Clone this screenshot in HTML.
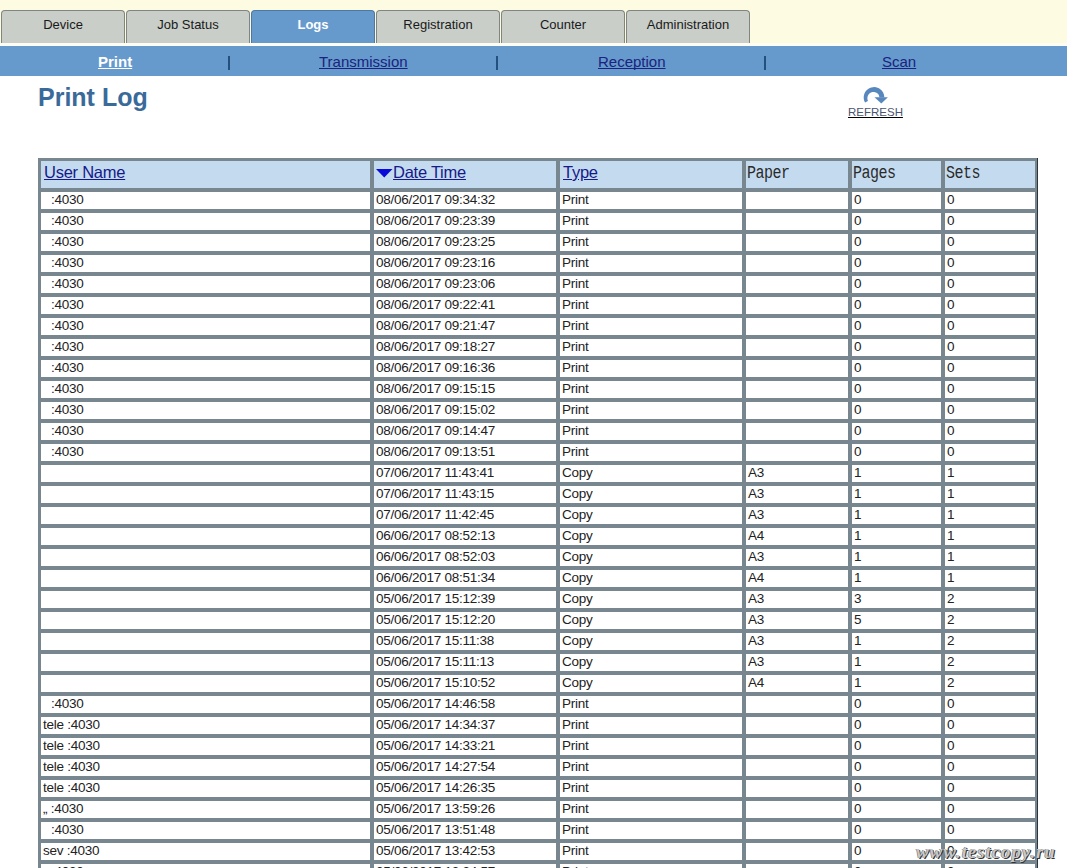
<!DOCTYPE html>
<html><head><meta charset="utf-8">
<style>
html,body{margin:0;padding:0;}
body{width:1067px;height:868px;overflow:hidden;position:relative;background:#fff;font-family:"Liberation Sans",sans-serif;}
#top{position:absolute;left:0;top:0;width:1067px;height:46px;background:#fdfce2;}
#strip{position:absolute;left:0;top:43px;width:1067px;height:3px;background:#fdfdf3;}
.tab{position:absolute;top:10px;width:122px;height:32px;background:#c9cec9;border:1px solid #80857f;border-bottom:none;border-radius:4px 4px 0 0;font-size:13px;color:#1a1a1a;text-align:center;line-height:28px;}
.tab.on{background:#6699cc;border-color:#4c78a8;color:#fff;font-weight:bold;}
#nav{position:absolute;left:0;top:46px;width:1067px;height:30px;background:#6699cc;}
.nl{position:absolute;top:6px;font-size:15px;color:#1a237e;text-decoration:underline;text-decoration-skip-ink:none;white-space:nowrap;}
.nl.on{color:#fff;font-weight:bold;}
.sep{position:absolute;top:56px;width:2px;height:14px;background:#24507e;}
#title{position:absolute;left:38px;top:83px;font-size:25px;font-weight:bold;color:#3a6a9a;white-space:nowrap;}
#refresh{position:absolute;left:848px;top:106px;font-size:11.5px;color:#4a5570;text-decoration:underline;text-decoration-color:#000;}
#icon{position:absolute;left:858px;top:82px;}
#grid{position:absolute;left:38px;top:158px;width:994px;padding:3px;background:#78868f;box-shadow:inset -1px 0 0 #2c353c;display:grid;
 grid-template-columns:329px 182px 182px 102px 89px 90px;grid-template-rows:27px;grid-auto-rows:17px;gap:4px;}
.c{background:#fff;font-size:13.5px;letter-spacing:-0.25px;color:#222;padding-left:2px;line-height:15px;white-space:nowrap;overflow:hidden;}
.u2{padding-left:10px;}
.h{background:#c4dbef;font-size:16.5px;line-height:23px;padding-left:3px;}
.h a{color:#16198a;text-decoration:underline;}
.hm{font-family:"Liberation Mono",monospace;font-size:15px;letter-spacing:-0.5px;color:#2a2a2a;padding-left:1px;}
.hm span{display:inline-block;transform:scaleY(1.25);transform-origin:0 80%;position:relative;top:3px;}
#wm{position:absolute;left:916px;top:841px;font-family:"Liberation Serif",serif;font-style:italic;font-weight:bold;font-size:19px;color:#c8c8c8;text-shadow:1px 1px 0 #333,-0.5px -0.5px 0 #666;white-space:nowrap;letter-spacing:0.9px;}
</style></head><body>
<div id="top"></div>
<div id="strip"></div>
<div class="tab" style="left:1px">Device</div>
<div class="tab" style="left:126px">Job Status</div>
<div class="tab on" style="left:251px">Logs</div>
<div class="tab" style="left:376px">Registration</div>
<div class="tab" style="left:501px">Counter</div>
<div class="tab" style="left:626px">Administration</div>
<div id="nav"></div>
<div class="nl on" style="left:98px;top:53px">Print</div>
<div class="sep" style="left:228px"></div>
<div class="nl" style="left:319px;top:53px">Transmission</div>
<div class="sep" style="left:496px"></div>
<div class="nl" style="left:598px;top:53px">Reception</div>
<div class="sep" style="left:764px"></div>
<div class="nl" style="left:882px;top:53px">Scan</div>
<div id="title">Print Log</div>
<svg id="icon" width="36" height="26" viewBox="0 0 36 26">
<path d="M7.08 20.55 L6.40 19.13 L5.94 17.63 L5.72 16.07 L5.74 14.50 L6.00 12.95 L6.48 11.46 L7.19 10.06 L8.11 8.78 L9.21 7.66 L10.47 6.71 L11.85 5.97 L13.33 5.45 L14.88 5.16 L16.45 5.11 L18.01 5.30 L19.52 5.72 L20.95 6.37 L22.27 7.23 L23.44 8.28 L24.44 9.49 L25.24 10.84 L25.82 12.30 L26.18 13.83 L26.30 15.40 L21.30 15.40 L21.24 14.59 L21.05 13.81 L20.75 13.06 L20.34 12.36 L19.83 11.73 L19.23 11.20 L18.55 10.75 L17.81 10.42 L17.03 10.20 L16.23 10.11 L15.41 10.04 L14.57 10.08 L13.73 10.24 L12.90 10.54 L12.12 10.98 L11.40 11.54 L10.76 12.22 L10.22 13.01 L9.80 13.88 L9.52 14.83 L9.39 15.83 L9.41 16.86 L9.59 17.89 L9.94 18.90 Z" fill="#5887bd"/>
<path d="M16.5 15.2 L29.9 15.2 L23.3 21.6 Z" fill="#5887bd"/>
</svg>
<div id="refresh">REFRESH</div>
<div id="grid">
<div class="c h"><a>User Name</a></div>
<div class="c h"><svg width="17" height="9" style="vertical-align:0px;margin-left:-1px"><path d="M0 0 L16.5 0 L8.25 8.5 Z" fill="#0a0ad8"/></svg><a>Date Time</a></div>
<div class="c h"><a>Type</a></div>
<div class="c h hm"><span>Paper</span></div>
<div class="c h hm"><span>Pages</span></div>
<div class="c h hm"><span>Sets</span></div>
<div class="c u2">:4030</div><div class="c">08/06/2017 09:34:32</div><div class="c">Print</div><div class="c"></div><div class="c">0</div><div class="c">0</div>
<div class="c u2">:4030</div><div class="c">08/06/2017 09:23:39</div><div class="c">Print</div><div class="c"></div><div class="c">0</div><div class="c">0</div>
<div class="c u2">:4030</div><div class="c">08/06/2017 09:23:25</div><div class="c">Print</div><div class="c"></div><div class="c">0</div><div class="c">0</div>
<div class="c u2">:4030</div><div class="c">08/06/2017 09:23:16</div><div class="c">Print</div><div class="c"></div><div class="c">0</div><div class="c">0</div>
<div class="c u2">:4030</div><div class="c">08/06/2017 09:23:06</div><div class="c">Print</div><div class="c"></div><div class="c">0</div><div class="c">0</div>
<div class="c u2">:4030</div><div class="c">08/06/2017 09:22:41</div><div class="c">Print</div><div class="c"></div><div class="c">0</div><div class="c">0</div>
<div class="c u2">:4030</div><div class="c">08/06/2017 09:21:47</div><div class="c">Print</div><div class="c"></div><div class="c">0</div><div class="c">0</div>
<div class="c u2">:4030</div><div class="c">08/06/2017 09:18:27</div><div class="c">Print</div><div class="c"></div><div class="c">0</div><div class="c">0</div>
<div class="c u2">:4030</div><div class="c">08/06/2017 09:16:36</div><div class="c">Print</div><div class="c"></div><div class="c">0</div><div class="c">0</div>
<div class="c u2">:4030</div><div class="c">08/06/2017 09:15:15</div><div class="c">Print</div><div class="c"></div><div class="c">0</div><div class="c">0</div>
<div class="c u2">:4030</div><div class="c">08/06/2017 09:15:02</div><div class="c">Print</div><div class="c"></div><div class="c">0</div><div class="c">0</div>
<div class="c u2">:4030</div><div class="c">08/06/2017 09:14:47</div><div class="c">Print</div><div class="c"></div><div class="c">0</div><div class="c">0</div>
<div class="c u2">:4030</div><div class="c">08/06/2017 09:13:51</div><div class="c">Print</div><div class="c"></div><div class="c">0</div><div class="c">0</div>
<div class="c"></div><div class="c">07/06/2017 11:43:41</div><div class="c">Copy</div><div class="c">A3</div><div class="c">1</div><div class="c">1</div>
<div class="c"></div><div class="c">07/06/2017 11:43:15</div><div class="c">Copy</div><div class="c">A3</div><div class="c">1</div><div class="c">1</div>
<div class="c"></div><div class="c">07/06/2017 11:42:45</div><div class="c">Copy</div><div class="c">A3</div><div class="c">1</div><div class="c">1</div>
<div class="c"></div><div class="c">06/06/2017 08:52:13</div><div class="c">Copy</div><div class="c">A4</div><div class="c">1</div><div class="c">1</div>
<div class="c"></div><div class="c">06/06/2017 08:52:03</div><div class="c">Copy</div><div class="c">A3</div><div class="c">1</div><div class="c">1</div>
<div class="c"></div><div class="c">06/06/2017 08:51:34</div><div class="c">Copy</div><div class="c">A4</div><div class="c">1</div><div class="c">1</div>
<div class="c"></div><div class="c">05/06/2017 15:12:39</div><div class="c">Copy</div><div class="c">A3</div><div class="c">3</div><div class="c">2</div>
<div class="c"></div><div class="c">05/06/2017 15:12:20</div><div class="c">Copy</div><div class="c">A3</div><div class="c">5</div><div class="c">2</div>
<div class="c"></div><div class="c">05/06/2017 15:11:38</div><div class="c">Copy</div><div class="c">A3</div><div class="c">1</div><div class="c">2</div>
<div class="c"></div><div class="c">05/06/2017 15:11:13</div><div class="c">Copy</div><div class="c">A3</div><div class="c">1</div><div class="c">2</div>
<div class="c"></div><div class="c">05/06/2017 15:10:52</div><div class="c">Copy</div><div class="c">A4</div><div class="c">1</div><div class="c">2</div>
<div class="c u2">:4030</div><div class="c">05/06/2017 14:46:58</div><div class="c">Print</div><div class="c"></div><div class="c">0</div><div class="c">0</div>
<div class="c">tele :4030</div><div class="c">05/06/2017 14:34:37</div><div class="c">Print</div><div class="c"></div><div class="c">0</div><div class="c">0</div>
<div class="c">tele :4030</div><div class="c">05/06/2017 14:33:21</div><div class="c">Print</div><div class="c"></div><div class="c">0</div><div class="c">0</div>
<div class="c">tele :4030</div><div class="c">05/06/2017 14:27:54</div><div class="c">Print</div><div class="c"></div><div class="c">0</div><div class="c">0</div>
<div class="c">tele :4030</div><div class="c">05/06/2017 14:26:35</div><div class="c">Print</div><div class="c"></div><div class="c">0</div><div class="c">0</div>
<div class="c">„ :4030</div><div class="c">05/06/2017 13:59:26</div><div class="c">Print</div><div class="c"></div><div class="c">0</div><div class="c">0</div>
<div class="c u2">:4030</div><div class="c">05/06/2017 13:51:48</div><div class="c">Print</div><div class="c"></div><div class="c">0</div><div class="c">0</div>
<div class="c">sev :4030</div><div class="c">05/06/2017 13:42:53</div><div class="c">Print</div><div class="c"></div><div class="c">0</div><div class="c">0</div>
<div class="c u2">:4030</div><div class="c">05/06/2017 13:34:57</div><div class="c">Print</div><div class="c"></div><div class="c">0</div><div class="c">0</div>
</div>
<div id="wm">www.testcopy.ru</div>
</body></html>
